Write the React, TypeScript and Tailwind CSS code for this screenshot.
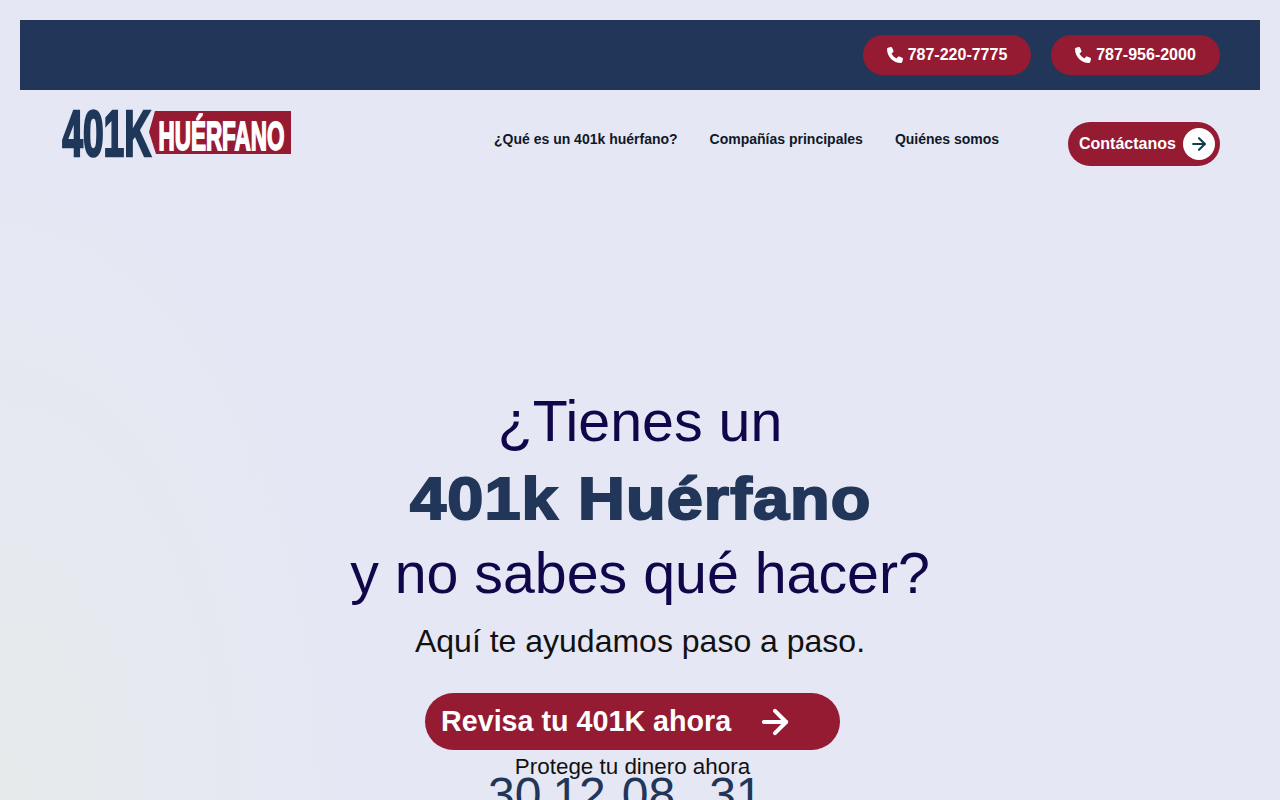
import { ArrowRight } from 'lucide-react';

const sans = { fontFamily: '"Liberation Sans", Arial, sans-serif' };

function Phone() {
  return (
    <svg viewBox="0 0 512 512" className="w-4 h-4 fill-white shrink-0">
      <path d="M164.9 24.6c-7.7-18.6-28-28.5-47.4-23.2l-88 24C12.1 30.2 0 46 0 64 0 311.4 200.6 512 448 512c18 0 33.8-12.1 38.6-29.5l24-88c5.3-19.4-4.6-39.7-23.2-47.4l-96-40c-16.3-6.8-35.2-2.1-46.3 11.6L304.7 368C234.3 334.7 177.3 277.7 144 207.3l49.3-40.3c13.7-11.2 18.4-30 11.6-46.3l-40-96z" />
    </svg>
  );
}

function PhoneButton({ number, wide }: { number: string; wide?: boolean }) {
  return (
    <a
      className={`flex items-center justify-center gap-[5px] h-10 rounded-full bg-[#951b33] text-white text-base font-bold ${
        wide ? 'w-[169px]' : 'w-[168px]'
      }`}
    >
      <Phone />
      {number}
    </a>
  );
}

function Logo() {
  return (
    <svg viewBox="0 0 232 52" className="w-[232px] h-[52px] overflow-visible">
      <text
        x="1.2"
        y="48.5"
        textLength="89"
        lengthAdjust="spacingAndGlyphs"
        fontSize="65"
        fontWeight="700"
        fill="#1f3759"
        stroke="#1f3759"
        strokeWidth="2.6"
        fontFamily="Liberation Sans Narrow, Liberation Sans, Arial, sans-serif"
      >
        401K
      </text>
      <polygon
        points="94,4 230,4 230,47 95,47 88,25"
        fill="#951b33"
        stroke="#e5e7f4"
        strokeWidth="6"
        paintOrder="stroke"
      />
      <text
        x="97.5"
        y="43"
        textLength="126"
        lengthAdjust="spacingAndGlyphs"
        fontSize="40"
        fontWeight="700"
        fill="#fff"
        stroke="#fff"
        strokeWidth="1.8"
        fontFamily="Liberation Sans Narrow, Liberation Sans, Arial, sans-serif"
      >
        HUÉRFANO
      </text>
    </svg>
  );
}

export default function App() {
  return (
    <div
      className="h-[800px] overflow-hidden p-5 bg-[radial-gradient(ellipse_340px_620px_at_0%_100%,#e6eaea,#e5e7f4)]"
      style={sans}
    >
      <div className="flex justify-end gap-5 h-[70px] items-center px-10 bg-[#213658]">
        <PhoneButton number="787-220-7775" />
        <PhoneButton number="787-956-2000" wide />
      </div>

      <header className="flex items-start h-[96px] pl-[41px] pr-10">
        <div className="pt-[17px]">
          <Logo />
        </div>
        <nav className="flex gap-8 ml-[201px] pt-[41px] text-sm font-bold text-[#111827] leading-[16px]">
          <a>¿Qué es un 401k huérfano?</a>
          <a>Compañías principales</a>
          <a>Quiénes somos</a>
        </nav>
        <a className="flex items-center ml-auto mt-8 h-11 w-[152px] pl-[11px] rounded-full bg-[#951b33] text-white text-base font-bold">
          Contáctanos
          <span className="ml-[7px] w-8 h-8 rounded-full bg-white flex items-center justify-center">
            <ArrowRight className="w-5 h-5 text-[#0f3d4c]" strokeWidth={2.5} />
          </span>
        </a>
      </header>

      <main className="flex flex-col items-center pt-[197px] text-center">
        <h1 className="text-[57.3px] leading-[76px] font-normal text-[#10074a]">
          ¿Tienes un
          <br />
          <strong className="inline-block font-bold text-[59px] text-[#213658] scale-x-[1.1] translate-y-[2px] translate-x-[1px] tracking-[1px] [-webkit-text-stroke:2px_#213658]">
            401k Huérfano
          </strong>
          <br />
          y no sabes qué hacer?
        </h1>
        <p className="mt-[6px] text-[32px] leading-[48px] text-[#111]">Aquí te ayudamos paso a paso.</p>
        <div className="flex flex-col items-center self-start ml-[405px] mt-[28px] w-[415px]">
          <a className="flex items-center w-full h-[57px] pl-4 rounded-full bg-[#951b33] text-white text-[28.7px] font-bold">
            Revisa tu 401K ahora
            <ArrowRight className="ml-[25px] w-[38px] h-[38px]" strokeWidth={2.6} />
          </a>
          <p className="text-[22.4px] leading-[34px] text-[#111]">Protege tu dinero ahora</p>
        </div>
        <div className="flex self-start ml-[468px] -mt-[17px] text-[48px] leading-[56px] text-[#213658]">
          <span>30</span>
          <span className="ml-[11px]">12</span>
          <span className="ml-[16px]">08</span>
          <span className="ml-[34px]">31</span>
        </div>
      </main>
    </div>
  );
}
